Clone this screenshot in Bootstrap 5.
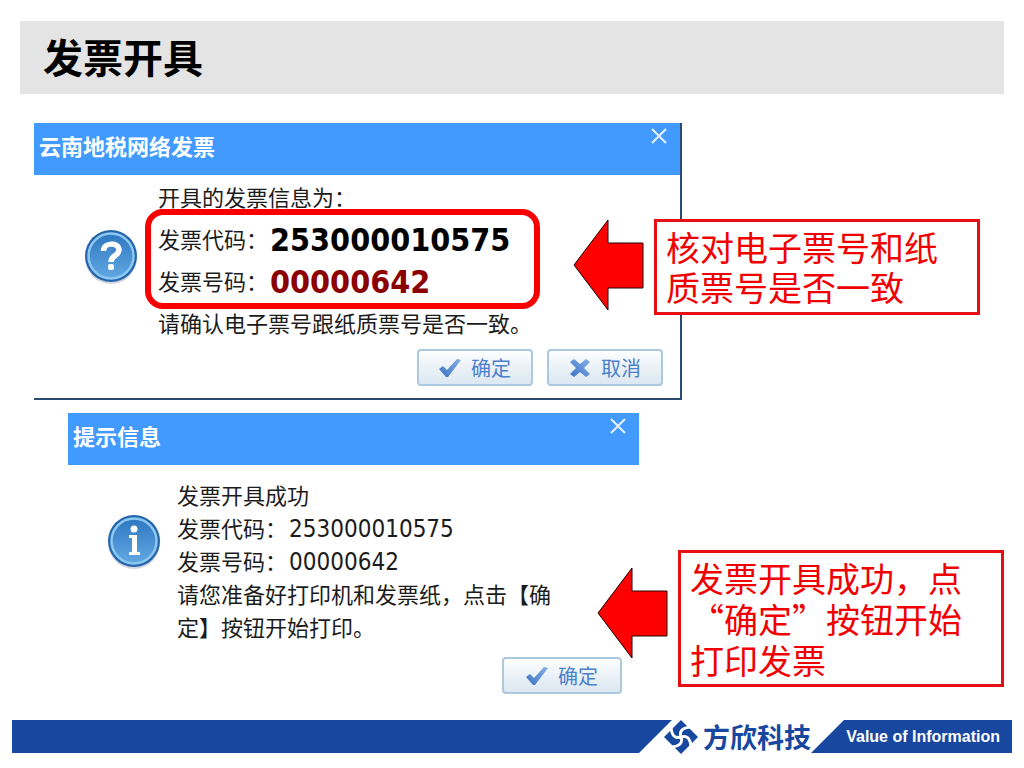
<!DOCTYPE html>
<html lang="zh-CN">
<head>
<meta charset="utf-8">
<meta name="viewport" content="width=device-width, initial-scale=1">
<title>发票开具</title>
<link href="https://cdn.jsdelivr.net/npm/bootstrap@5.3.0/dist/css/bootstrap.min.css" rel="stylesheet">
<style>
  body { font-family: "Noto Sans CJK SC", sans-serif; color: #1c1c1c; background: #fff; }
  .slide-title { margin: 21px 20px 0; padding: 0 23px 2px; background: #e4e4e4; }
  .slide-title h1 { font-size: 40px; line-height: 71px; font-weight: 700; color: #000; }
  .stage { padding: 29px 20px 20px 34px; }
  .dlg { position: relative; max-width: 100%; }
  .dlg-confirm { width: 648px; height: 277px; border: solid #2b4c72; border-width: 0 2px 2px 0; }
  .dlg-info { width: 571px; margin: 13px 0 0 34px; }
  .dlg-head { background: #429aff; height: 52px; padding: 0 13px 0 5px; }
  .dlg-head h2 { font-size: 22px; line-height: 45px; font-weight: 700; color: #fff; }
  .dlg-close { width: 16px; height: 26px; }
  .dlg-text { font-size: 22px; line-height: 42px; padding: 0 0 0 124px; }
  .dlg-info .dlg-text { line-height: 33px; padding: 13px 80px 0 109px; }
  .dlg-text p { margin: 0; }
  .dlg-icon { position: absolute; width: 56px; height: 56px; left: 49px; top: 106px; }
  .dlg-info .dlg-icon { left: 38px; top: 101px; }
  .num { font-family: "DejaVu Sans Condensed", "DejaVu Sans", sans-serif; font-size: 24px; line-height: 1; margin: 3px 0 0 2px; }
  .num-big { font-size: 32px; font-weight: 700; color: #000; }
  .num-red { color: #8b0000; }
  .mark-frame { position: absolute; left: 111px; top: 86px; width: 395px; height: 100px; border: 6px solid #f90000; border-radius: 18px; }
  .dlg-foot { gap: 14px; padding: 6px 17px 0 0; }
  .dlg-info .dlg-foot { padding-top: 14px; }
  .dlg-btn { width: 116px; height: 37px; padding: 0; gap: 10px; font-size: 20px; line-height: 32px; color: #4a80cc; border: 2px solid #acc9e0; border-radius: 4px; background: linear-gradient(#fdfeff, #e9f0f6 55%, #dce8f2); }
  .dlg-info .dlg-btn { width: 120px; }
  .callout { position: absolute; gap: 10px; }
  .callout-confirm { left: 539px; top: 96px; }
  .callout-info { left: 529px; top: 137px; }
  .callout-info svg { margin-top: 17px; }
  .callout-box { width: 326px; border: 3px solid #e60f14; background: #fff; color: #f00000; font-size: 34px; line-height: 40px; padding: 5px 9px; }
  .callout-info .callout-box { line-height: 41px; padding: 4px 9px; }
  .slide-foot { margin: 0 12px 15px; height: 33px; color: #17479e; }
  .bar { background: #17479e; }
  .bar-left { clip-path: polygon(0 0, 100% 0, calc(100% - 33px) 100%, 0 100%); }
  .bar-right { width: 201px; padding-right: 12px; clip-path: polygon(33px 0, 100% 0, 100% 100%, 0 100%); color: #fff; font-family: "Liberation Sans", sans-serif; font-weight: 700; font-size: 16px; }
  .brand { width: 139px; gap: 5px; font-size: 27px; line-height: 33px; font-weight: 700; }
  .brand svg { margin-left: -8px; }
</style>
</head>
<body>
<svg class="position-absolute" width="0" height="0" aria-hidden="true">
  <defs>
    <linearGradient id="ball" x1="0" y1="0" x2="0" y2="1"><stop offset="0" stop-color="#2e78c0"/><stop offset="1" stop-color="#62a8e2"/></linearGradient>
    <linearGradient id="ink" x1="0" y1="1" x2="1" y2="0"><stop offset="0" stop-color="#3c73c6"/><stop offset="1" stop-color="#86b0e6"/></linearGradient>
  </defs>
</svg>
<div class="d-flex flex-column min-vh-100 overflow-hidden">
  <header class="slide-title"><h1 class="m-0">发票开具</h1></header>

  <main class="stage">
    <section class="dlg dlg-confirm">
      <div class="dlg-head d-flex justify-content-between align-items-start">
        <h2 class="m-0">云南地税网络发票</h2>
        <button type="button" class="dlg-close btn p-0 border-0 d-flex align-items-center" aria-label="关闭">
          <svg width="16" height="16" viewBox="0 0 16 16"><path d="M1 1l14 14M15 1L1 15" stroke="#e4f0ff" stroke-width="2" fill="none"/></svg>
        </button>
      </div>
      <svg class="dlg-icon" viewBox="0 0 56 56" aria-hidden="true">
        <circle cx="28" cy="29" r="26" fill="#b9bccb" opacity=".6"/>
        <circle cx="28" cy="27" r="26" fill="#2566ab"/><circle cx="28" cy="27" r="22.5" fill="url(#ball)" stroke="#8cc8f2" stroke-width="2.5"/>
        <path d="M20.500 22c0-9 15.500-9 15.500-1 0 6-8 5-8 12" stroke="#fff" stroke-width="5.500" fill="none"/><rect x="25" y="35" width="6" height="6" rx="2" fill="#fff"/>
      </svg>
      <div class="dlg-text">
        <p>开具的发票信息为：</p>
        <p class="d-flex align-items-center">发票代码：<span class="num num-big">253000010575</span></p>
        <p class="d-flex align-items-center">发票号码：<span class="num num-big num-red">00000642</span></p>
        <p>请确认电子票号跟纸质票号是否一致。</p>
      </div>
      <div class="mark-frame"></div>
      <div class="dlg-foot d-flex justify-content-end">
        <button type="button" class="dlg-btn btn d-flex align-items-center justify-content-center">
          <svg width="22" height="20" viewBox="0 0 22 20"><path d="M0 11l4-3 4 4L18 1l4 1L9 19H7z" fill="url(#ink)"/></svg>确定</button>
        <button type="button" class="dlg-btn btn d-flex align-items-center justify-content-center">
          <svg width="22" height="20" viewBox="0 0 22 20"><path d="M1 4l4-3 6 5 6-5 4 3-6 6 6 6-4 3-6-5-6 5-4-3 6-6z" fill="url(#ink)"/></svg>取消</button>
      </div>
      <div class="callout callout-confirm d-flex align-items-start">
        <svg class="flex-shrink-0" width="71" height="92" viewBox="0 0 71 92" aria-hidden="true"><path d="M1 46L35 1V24H70V69H35V91z" fill="#f00" stroke="#200" stroke-width="1"/></svg>
        <div class="callout-box flex-shrink-0">核对电子票号和纸质票号是否一致</div>
      </div>
    </section>

    <section class="dlg dlg-info">
      <div class="dlg-head d-flex justify-content-between align-items-start">
        <h2 class="m-0">提示信息</h2>
        <button type="button" class="dlg-close btn p-0 border-0 d-flex align-items-center" aria-label="关闭">
          <svg width="16" height="16" viewBox="0 0 16 16"><path d="M1 1l14 14M15 1L1 15" stroke="#e4f0ff" stroke-width="2" fill="none"/></svg>
        </button>
      </div>
      <svg class="dlg-icon" viewBox="0 0 56 56" aria-hidden="true">
        <circle cx="28" cy="29" r="26" fill="#b9bccb" opacity=".6"/>
        <circle cx="28" cy="27" r="26" fill="#2566ab"/><circle cx="28" cy="27" r="22.5" fill="url(#ball)" stroke="#8cc8f2" stroke-width="2.5"/>
        <circle cx="28" cy="15" r="3.5" fill="#fff"/><path d="M23 21h8v17h3v3H23v-3h3V24h-3z" fill="#fff"/>
      </svg>
      <div class="dlg-text">
        <p>发票开具成功</p>
        <p class="d-flex align-items-center">发票代码：<span class="num">253000010575</span></p>
        <p class="d-flex align-items-center">发票号码：<span class="num">00000642</span></p>
        <p>请您准备好打印机和发票纸，点击【确定】按钮开始打印。</p>
      </div>
      <div class="dlg-foot d-flex justify-content-end">
        <button type="button" class="dlg-btn btn d-flex align-items-center justify-content-center">
          <svg width="22" height="20" viewBox="0 0 22 20"><path d="M0 11l4-3 4 4L18 1l4 1L9 19H7z" fill="url(#ink)"/></svg>确定</button>
      </div>
      <div class="callout callout-info d-flex align-items-start">
        <svg class="flex-shrink-0" width="71" height="92" viewBox="0 0 71 92" aria-hidden="true"><path d="M1 46L35 1V24H70V69H35V91z" fill="#f00" stroke="#200" stroke-width="1"/></svg>
        <div class="callout-box flex-shrink-0">发票开具成功，点“确定”按钮开始打印发票</div>
      </div>
    </section>
  </main>

  <footer class="slide-foot d-flex mt-auto">
    <div class="bar bar-left flex-grow-1"></div>
    <div class="brand d-flex align-items-center text-nowrap">
      <svg class="flex-shrink-0" width="34" height="34" viewBox="0 0 34 34" aria-hidden="true"><path d="M17 0l17 17-17 17L0 17z" fill="#17479e"/><path d="M27 7Q14 8 17 17T7 27M27 27Q26 14 17 17T7 7" stroke="#fff" stroke-width="3" fill="none"/></svg>
      <span>方欣科技</span>
    </div>
    <div class="bar bar-right d-flex align-items-center justify-content-end text-nowrap">Value of Information</div>
  </footer>
</div>
<script src="https://cdn.jsdelivr.net/npm/bootstrap@5.3.0/dist/js/bootstrap.bundle.min.js"></script>
</body>
</html>
